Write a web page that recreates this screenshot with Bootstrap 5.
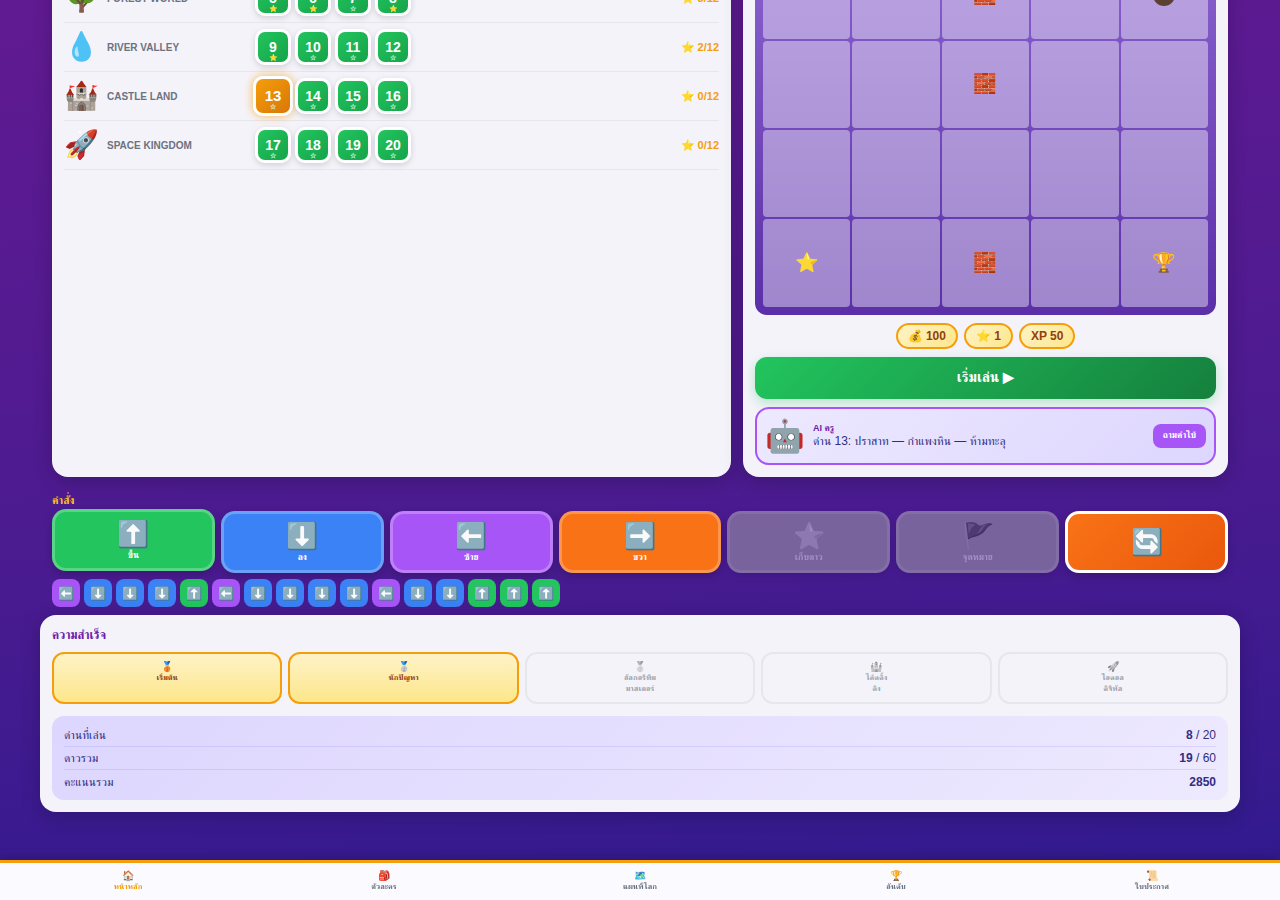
<!DOCTYPE html>
<html lang="en">
<head>
    <meta charset="UTF-8">
    <meta name="viewport" content="width=device-width, initial-scale=1.0">
    <title>Code Adventure</title>
    <link href="https://cdn.jsdelivr.net/npm/bootstrap@5.3.3/dist/css/bootstrap.min.css" rel="stylesheet">
    <style>
        html, body { height: 900px; overflow: hidden; }
        body {
            background: linear-gradient(175deg, #611a92 0%, #4b1b90 55%, #2f1a8e 100%);
            font-family: "Liberation Sans", FreeSerif, sans-serif;
        }
        /* FreeSerif has its own plain star and drop, emoji must skip it */
        .emo { font-family: "Liberation Sans", sans-serif; }
        .game-wrap { width: 1200px; margin: 0 auto; }
        .top-area { display: flex; gap: 12px; margin: -68.4px 12px 0; height: 545.4px; }
        .panel { background: #f5f3fa; border: 0; border-radius: 16px; box-shadow: 0 4px 20px rgba(0,0,0,.2); }
        .worlds-panel { width: 679px; padding: 42.4px 12px 0; }
        .board-panel { width: 485px; padding: 12px; }
        .world-row { height: 49px; display: flex; align-items: center; border-bottom: 1px solid #e5e7eb; }
        .world-icon { width: 34px; font-size: 28px; line-height: 1; text-align: center; margin-right: 9px; }
        .world-name { width: 148px; font-size: 10px; font-weight: 700; color: #6b7280; text-transform: uppercase; }
        .level-list { display: flex; gap: 4px; flex: 1; align-items: center; }
        .level-btn {
            width: 36px; height: 36px; padding: 7px 0 0; border: 3px solid #fff; border-radius: 10px;
            background: linear-gradient(135deg, #22c55e, #16a34a); color: #fff;
            font-size: 14px; font-weight: 700; line-height: 16px;
            box-shadow: 0 2px 6px rgba(0,0,0,.15);
            display: flex; flex-direction: column; align-items: center; justify-content: flex-start;
        }
        .level-btn:hover, .level-btn:focus { background: linear-gradient(135deg, #22c55e, #16a34a); color: #fff; border-color: #fff; }
        .level-btn .lvl-star { font-size: 7px; line-height: 8px; margin-top: -1px; height: 8px; color: #d1fae5; }
        .level-btn.lvl-current {
            width: 40px; height: 40px; margin: 0 -2px; padding-top: 9px;
            background: linear-gradient(135deg, #f59e0b, #d97706);
            font-size: 15px; box-shadow: 0 0 10px rgba(245,158,11,.7);
        }
        .world-score { font-size: 11px; font-weight: 700; color: #f59e0b; }
        .maze-board {
            background: linear-gradient(180deg, #8b63cf, #5b2fa8);
            padding: 8px; border-radius: 12px;
            display: grid; grid-template-columns: repeat(5, 1fr); grid-auto-rows: 87.25px; gap: 2px;
        }
        .maze-cell {
            background: rgba(255,255,255,.42); border-radius: 4px;
            display: flex; align-items: center; justify-content: center; font-size: 19px;
        }
        .rock-ball { width: 22px; height: 22px; border-radius: 50%; background: #5c4033; }
        .loot-row { display: flex; justify-content: center; gap: 6px; margin-top: 8px; }
        .loot-pill {
            height: 26px; padding: 0 10px; border: 2px solid #f59e0b; border-radius: 13px;
            background: linear-gradient(135deg, #fef3c7, #fde68a); color: #92400e;
            font-size: 12px; font-weight: 700; display: flex; align-items: center; gap: 4px;
        }
        .start-btn {
            height: 42px; border: 0; border-radius: 12px; color: #fff; font-size: 14px; font-weight: 700;
            background: linear-gradient(135deg, #22c55e, #15803d); box-shadow: 0 4px 12px rgba(34,197,94,.3);
        }
        .ai-box {
            height: 58px; padding: 0 8px; border: 2px solid #a855f7; border-radius: 14px;
            background: linear-gradient(135deg, #ede9fe, #ddd6fe); display: flex; align-items: center; gap: 8px;
        }
        .ai-face { font-size: 32px; line-height: 1; }
        .ai-who { font-size: 9px; font-weight: 700; color: #6b21a8; line-height: 12px; }
        .ai-say { font-size: 12px; color: #312e81; line-height: 15px; }
        .hint-btn {
            width: 53px; height: 24px; padding: 0; border: 0; border-radius: 8px;
            background: #a855f7; color: #fff; font-size: 9px; font-weight: 700;
        }
        .cmd-zone { margin: 0 12px; }
        .cmd-title { font-size: 11px; font-weight: 700; color: #fbbf24; line-height: 14px; margin-top: 16px; }
        .cmd-row { display: grid; grid-template-columns: repeat(7, 1fr); gap: 6px; margin-top: 4px; }
        .cmd-btn {
            height: 62px; padding: 0; border: 3px solid rgba(255,255,255,.25); border-radius: 14px; color: #fff;
            display: flex; flex-direction: column; align-items: center; justify-content: center;
            box-shadow: 0 3px 8px rgba(0,0,0,.2);
        }
        .cmd-btn .cmd-emoji { font-size: 26px; line-height: 30px; }
        .cmd-btn .cmd-name { font-size: 9px; font-weight: 700; line-height: 12px; }
        .cmd-btn.is-up { background: #22c55e; transform: translateY(-2px); }
        .cmd-btn.is-down { background: #3b82f6; }
        .cmd-btn.is-left { background: #a855f7; }
        .cmd-btn.is-right { background: #f97316; }
        .cmd-btn.is-off { background: #a8acaa; opacity: .5; filter: grayscale(1); }
        .cmd-btn.is-reset { background: linear-gradient(135deg, #f97316, #ea580c); border-color: #fff; }
        .queue-row { display: flex; gap: 4px; margin-top: 6px; }
        .queue-chip {
            width: 28px; height: 28px; border-radius: 8px; font-size: 13px; line-height: 1;
            display: flex; align-items: center; justify-content: center;
        }
        .chip-up { background: #22c55e; }
        .chip-down { background: #3b82f6; }
        .chip-left { background: #a855f7; }
        .goals-panel { margin-top: 8px; height: 197px; padding: 12px; }
        .goals-title { font-size: 12px; font-weight: 700; color: #6b21a8; line-height: 17px; margin-bottom: 8px; }
        .badge-row { display: grid; grid-template-columns: repeat(5, 1fr); gap: 6px; }
        .goal-tile {
            height: 52px; padding-top: 8px; border: 2px solid #e5e7eb; border-radius: 12px; text-align: center;
            font-size: 8px; line-height: 11px; font-weight: 700; color: #9ca3af;
        }
        .goal-tile .goal-emoji { display: block; font-size: 10px; line-height: 10px; filter: grayscale(1); opacity: .6; }
        .goal-tile.is-earned { background: linear-gradient(180deg, #fef3c7, #fde68a); border-color: #f59e0b; color: #92400e; }
        .goal-tile.is-earned .goal-emoji { filter: none; opacity: 1; }
        .stats-box {
            margin-top: 12px; height: 84px; padding: 8px 12px; border-radius: 12px;
            background: linear-gradient(135deg, #ddd6fe, #ede9fe); color: #312e81;
        }
        .stat-line { height: 23px; display: flex; align-items: center; justify-content: space-between; border-bottom: 1px solid rgba(99,102,241,.15); font-size: 12px; }
        .stat-line:last-child { border-bottom: 0; }
        .tab-bar {
            position: fixed; left: 0; right: 0; bottom: 0; height: 40px;
            display: grid; grid-template-columns: repeat(5, 1fr);
            background: #fafaff; border-top: 3px solid #f59e0b; box-shadow: 0 -2px 10px rgba(0,0,0,.2);
        }
        .tab-link {
            text-decoration: none; color: #6b7280; text-align: center; padding-top: 8px;
            font-size: 8px; font-weight: 700; line-height: 11px;
        }
        .tab-link .tab-emoji { display: block; font-size: 10px; line-height: 10px; }
        .tab-link.is-active { color: #f59e0b; }
    </style>
</head>
<body>
    <div class="game-wrap">
        <div class="top-area">
            <div class="card panel worlds-panel">
                <div class="world-row">
                    <div class="world-icon emo">🌳</div>
                    <div class="world-name">Forest World</div>
                    <div class="level-list">
                        <button class="btn level-btn">5<span class="lvl-star emo">⭐</span></button>
                        <button class="btn level-btn">6<span class="lvl-star emo">⭐</span></button>
                        <button class="btn level-btn">7<span class="lvl-star emo">☆</span></button>
                        <button class="btn level-btn">8<span class="lvl-star emo">⭐</span></button>
                    </div>
                    <div class="world-score"><span class="emo">⭐</span> 3/12</div>
                </div>
                <div class="world-row">
                    <div class="world-icon emo">💧</div>
                    <div class="world-name">River Valley</div>
                    <div class="level-list">
                        <button class="btn level-btn">9<span class="lvl-star emo">⭐</span></button>
                        <button class="btn level-btn">10<span class="lvl-star emo">☆</span></button>
                        <button class="btn level-btn">11<span class="lvl-star emo">☆</span></button>
                        <button class="btn level-btn">12<span class="lvl-star emo">☆</span></button>
                    </div>
                    <div class="world-score"><span class="emo">⭐</span> 2/12</div>
                </div>
                <div class="world-row">
                    <div class="world-icon emo">🏰</div>
                    <div class="world-name">Castle Land</div>
                    <div class="level-list">
                        <button class="btn level-btn lvl-current">13<span class="lvl-star emo">☆</span></button>
                        <button class="btn level-btn">14<span class="lvl-star emo">☆</span></button>
                        <button class="btn level-btn">15<span class="lvl-star emo">☆</span></button>
                        <button class="btn level-btn">16<span class="lvl-star emo">☆</span></button>
                    </div>
                    <div class="world-score"><span class="emo">⭐</span> 0/12</div>
                </div>
                <div class="world-row">
                    <div class="world-icon emo">🚀</div>
                    <div class="world-name">Space Kingdom</div>
                    <div class="level-list">
                        <button class="btn level-btn">17<span class="lvl-star emo">☆</span></button>
                        <button class="btn level-btn">18<span class="lvl-star emo">☆</span></button>
                        <button class="btn level-btn">19<span class="lvl-star emo">☆</span></button>
                        <button class="btn level-btn">20<span class="lvl-star emo">☆</span></button>
                    </div>
                    <div class="world-score"><span class="emo">⭐</span> 0/12</div>
                </div>
            </div>
            <div class="card panel board-panel">
                <div class="maze-board emo">
                    <div class="maze-cell"></div><div class="maze-cell"></div><div class="maze-cell">🧱</div><div class="maze-cell"></div><div class="maze-cell"><span class="rock-ball"></span></div>
                    <div class="maze-cell"></div><div class="maze-cell"></div><div class="maze-cell">🧱</div><div class="maze-cell"></div><div class="maze-cell"></div>
                    <div class="maze-cell"></div><div class="maze-cell"></div><div class="maze-cell"></div><div class="maze-cell"></div><div class="maze-cell"></div>
                    <div class="maze-cell">⭐</div><div class="maze-cell"></div><div class="maze-cell">🧱</div><div class="maze-cell"></div><div class="maze-cell">🏆</div>
                </div>
                <div class="loot-row emo">
                    <div class="loot-pill">💰 100</div>
                    <div class="loot-pill">⭐ 1</div>
                    <div class="loot-pill">XP 50</div>
                </div>
                <button class="btn start-btn w-100 mt-2">เริ่มเล่น <span class="emo">▶</span></button>
                <div class="ai-box mt-2">
                    <div class="ai-face emo">🤖</div>
                    <div class="flex-grow-1">
                        <div class="ai-who">AI ครู</div>
                        <div class="ai-say">ด่าน 13: ปราสาท — กำแพงหิน — ห้ามทะลุ</div>
                    </div>
                    <button class="btn hint-btn">ถามคำใบ้</button>
                </div>
            </div>
        </div>

        <div class="cmd-zone">
            <div class="cmd-title">คำสั่ง</div>
            <div class="cmd-row">
                <button class="btn cmd-btn is-up"><span class="cmd-emoji emo">⬆️</span><span class="cmd-name">ขึ้น</span></button>
                <button class="btn cmd-btn is-down"><span class="cmd-emoji emo">⬇️</span><span class="cmd-name">ลง</span></button>
                <button class="btn cmd-btn is-left"><span class="cmd-emoji emo">⬅️</span><span class="cmd-name">ซ้าย</span></button>
                <button class="btn cmd-btn is-right"><span class="cmd-emoji emo">➡️</span><span class="cmd-name">ขวา</span></button>
                <button class="btn cmd-btn is-off"><span class="cmd-emoji emo">⭐</span><span class="cmd-name">เก็บดาว</span></button>
                <button class="btn cmd-btn is-off"><span class="cmd-emoji emo">🚩</span><span class="cmd-name">จุดหมาย</span></button>
                <button class="btn cmd-btn is-reset"><span class="cmd-emoji emo">🔄</span></button>
            </div>
            <div class="queue-row emo">
                <div class="queue-chip chip-left">⬅️</div>
                <div class="queue-chip chip-down">⬇️</div>
                <div class="queue-chip chip-down">⬇️</div>
                <div class="queue-chip chip-down">⬇️</div>
                <div class="queue-chip chip-up">⬆️</div>
                <div class="queue-chip chip-left">⬅️</div>
                <div class="queue-chip chip-down">⬇️</div>
                <div class="queue-chip chip-down">⬇️</div>
                <div class="queue-chip chip-down">⬇️</div>
                <div class="queue-chip chip-down">⬇️</div>
                <div class="queue-chip chip-left">⬅️</div>
                <div class="queue-chip chip-down">⬇️</div>
                <div class="queue-chip chip-down">⬇️</div>
                <div class="queue-chip chip-up">⬆️</div>
                <div class="queue-chip chip-up">⬆️</div>
                <div class="queue-chip chip-up">⬆️</div>
            </div>
        </div>

        <div class="card panel goals-panel">
            <div class="goals-title">ความสำเร็จ</div>
            <div class="badge-row">
                <div class="goal-tile is-earned"><span class="goal-emoji emo">🥉</span>เริ่มต้น</div>
                <div class="goal-tile is-earned"><span class="goal-emoji emo">🥈</span>นักปัญหา</div>
                <div class="goal-tile"><span class="goal-emoji emo">🥇</span>อัลกอริทึม<br>มาสเตอร์</div>
                <div class="goal-tile"><span class="goal-emoji emo">🏰</span>โค้ดดิ้ง<br>คิง</div>
                <div class="goal-tile"><span class="goal-emoji emo">🚀</span>ไอดอล<br>ดิจิทัล</div>
            </div>
            <div class="stats-box">
                <div class="stat-line"><span>ด่านที่เล่น</span><span><strong>8</strong> / 20</span></div>
                <div class="stat-line"><span>ดาวรวม</span><span><strong>19</strong> / 60</span></div>
                <div class="stat-line"><span>คะแนนรวม</span><span><strong>2850</strong></span></div>
            </div>
        </div>
    </div>

    <nav class="tab-bar">
        <a class="tab-link is-active" href="#"><span class="tab-emoji emo">🏠</span>หน้าหลัก</a>
        <a class="tab-link" href="#"><span class="tab-emoji emo">🎒</span>ตัวละคร</a>
        <a class="tab-link" href="#"><span class="tab-emoji emo">🗺️</span>แผนที่โลก</a>
        <a class="tab-link" href="#"><span class="tab-emoji emo">🏆</span>อันดับ</a>
        <a class="tab-link" href="#"><span class="tab-emoji emo">📜</span>ใบประกาศ</a>
    </nav>

    <script src="https://cdn.jsdelivr.net/npm/bootstrap@5.3.3/dist/js/bootstrap.bundle.min.js"></script>
</body>
</html>
